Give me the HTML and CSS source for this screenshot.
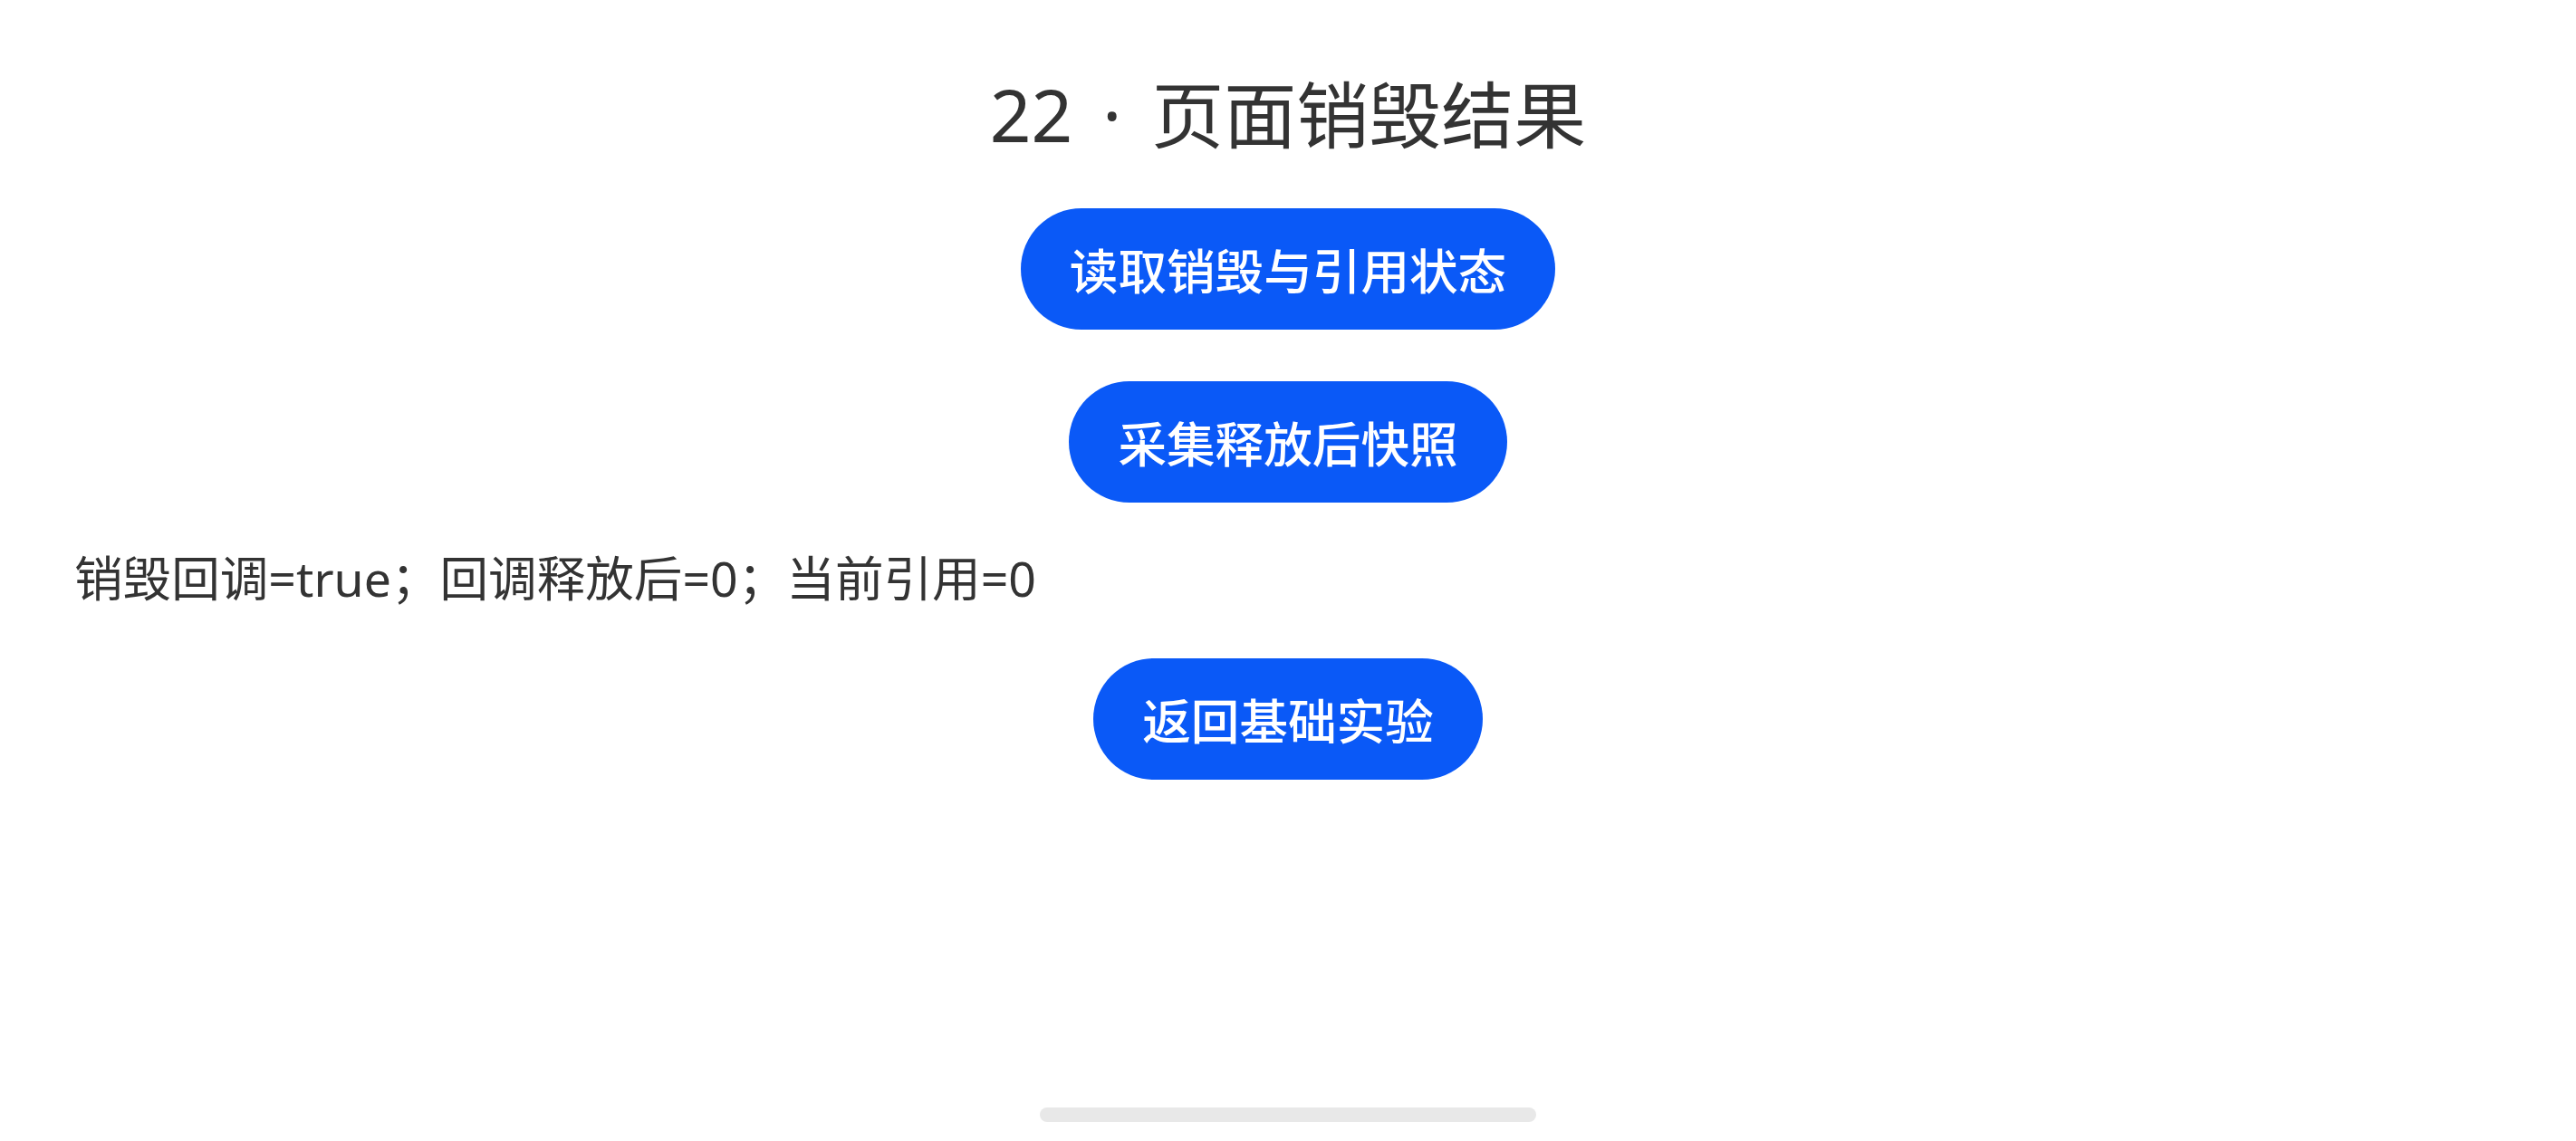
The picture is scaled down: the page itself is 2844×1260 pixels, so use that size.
FILE: index.html
```html
<!DOCTYPE html>
<html lang="zh-CN">
<head>
    <meta charset="UTF-8">
    <meta name="viewport" content="width=device-width, initial-scale=1.0">
    <title>页面销毁结果</title>
    <link rel="stylesheet" href="styles.css">
</head>
<body>
    <div class="page">
        <h1 class="title">22 <span class="sep">·</span> 页面销毁结果</h1>
        <button class="action first">读取销毁与引用状态</button>
        <button class="action">采集释放后快照</button>
        <p class="result">销毁回调=true；回调释放后=0；当前引用=0</p>
        <button class="action">返回基础实验</button>
    </div>
    <div class="home-bar"></div>
</body>
</html>
```

FILE: styles.css
```css
/* styles.css */
html, body {
    margin: 0;
    height: 100%;
    background-color: #fff;
}

body {
    font-family: "Noto Sans", "Noto Sans CJK SC", sans-serif;
    color: #333;
}

.page {
    display: flex;
    flex-direction: column;
    align-items: center;
    padding-top: 74px;
}

.title {
    margin: 0;
    font-size: 80px;
    font-weight: 400;
    line-height: 104px;
}

.title .sep {
    margin: 0 12px;
}

.action {
    height: 134px;
    padding: 0 54px;
    border: none;
    border-radius: 67px;
    background-color: #0a59f7;
    color: #fff;
    font-family: inherit;
    font-size: 53.6px;
    font-weight: 500;
    cursor: pointer;
}

.action.first {
    margin-top: 52px;
    margin-bottom: 57px;
}

.result {
    align-self: stretch;
    margin: 48px 0 52px;
    padding-left: 82px;
    font-size: 53.6px;
    line-height: 72px;
}

.home-bar {
    position: absolute;
    left: 1148px;
    top: 1223px;
    width: 548px;
    height: 16px;
    border-radius: 8px;
    background-color: #e8e8e8;
}
```
